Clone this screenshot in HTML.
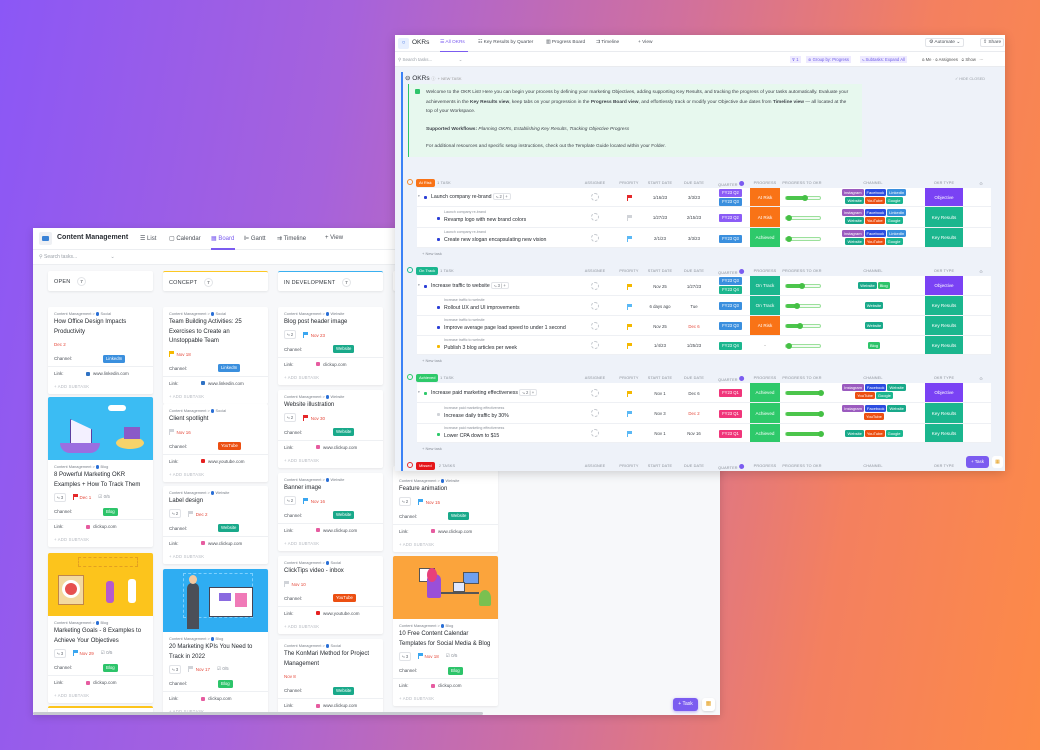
<!DOCTYPE html>
<html><head><meta charset="utf-8">
<style>
*{box-sizing:border-box}
body{margin:0;width:1040px;height:750px;overflow:hidden;position:relative;font-family:"Liberation Sans",sans-serif;color:#2a2e34;
background:linear-gradient(100deg,#8b57f6 0%,#a662dc 30%,#d0709e 58%,#f4805f 80%,#fd8a47 100%)}
.ab{position:absolute}
/* left window */
.lw{position:absolute;left:33px;top:228px;width:687px;height:487px;background:#f7f8fa;overflow:hidden;box-shadow:0 2px 8px rgba(0,0,0,.15)}
.lh{position:absolute;left:0;top:0;width:687px;height:22px;background:#fff;border-bottom:1px solid #eceef1}
.ls{position:absolute;left:0;top:22px;width:687px;height:15px;background:#fff;border-bottom:1px solid #eceef1}
.tab{position:absolute;top:7px;font-size:6px;color:#4b5058}
.colh{position:absolute;top:43px;width:105px;height:20px;background:#fff;border-radius:2px;box-shadow:0 1px 2px rgba(0,0,0,.08);font-size:5.5px;color:#33383f;padding:6px 6px;letter-spacing:.2px}
.colh b{font-weight:normal;display:inline-block;margin-left:5px;width:9px;height:9px;border:1px solid #e3e5e8;border-radius:50%;text-align:center;line-height:7px;font-size:4.5px;vertical-align:middle}
.card{position:absolute;width:105px;background:#fff;border-radius:2px;box-shadow:0 1px 2px rgba(0,0,0,.07);padding:3px 0 1px;overflow:hidden}
.card .img{height:63px;margin-top:-3px;margin-bottom:3px;position:relative;overflow:hidden}
.meta{font-size:3.9px;color:#7c828b;padding:0 6px;line-height:8px;white-space:nowrap}
.meta i{display:inline-block;width:3.5px;height:3.5px;border-radius:50%;background:#2a6fd6;vertical-align:middle}
.ttl{font-size:6px;line-height:9.5px;padding:0 6px;color:#25292f}
.ir{height:14px;padding:0 6px;display:flex;align-items:center;gap:7px;font-size:4.5px;color:#8a9099}
.chip{border:1px solid #e2e4e8;border-radius:2px;padding:1px 2px;font-size:4.5px;color:#6b7078}
.rd{color:#e5483a}
.fl{display:inline-block;width:5px;height:5px;position:relative}
.fl:before{content:"";position:absolute;left:0;top:0;width:1px;height:6px;background:currentColor}
.fl:after{content:"";position:absolute;left:1px;top:0;width:4px;height:3px;background:currentColor}
.ch{height:15px;padding:0 6px;position:relative;font-size:4.5px;line-height:15px;color:#4b5058}
.ch .tg{position:absolute;left:55px;top:3.5px}
.tg{display:inline-block;color:#fff;font-size:4.3px;line-height:8px;padding:0 3px;border-radius:1.5px}
.lk{height:14px;padding:0 6px;position:relative;font-size:4.5px;line-height:14px;color:#4b5058;border-top:1px solid #eef0f3}
.lk span{position:absolute;left:38px}
.lk span:before{content:"";display:inline-block;width:4px;height:4px;margin-right:3px;vertical-align:middle;background:var(--c,#e65ca0);border-radius:1px}
.as{height:13px;padding:0 6px;font-size:4.2px;line-height:13px;color:#b5b9c0;letter-spacing:.2px}
.li{background:#3a8fde}.yt{background:#ec4f12}.web{background:#19a98a}.blog{background:#2dc46a}
.ig{background:#9b5bbf}.fb{background:#2c4de0}.go{background:#1cb68f}
/* right window */
.rw{position:absolute;left:395px;top:35px;width:610px;height:436px;background:#eef2f9;overflow:hidden;box-shadow:0 2px 10px rgba(0,0,0,.18)}
.rh{position:absolute;left:0;top:0;width:610px;height:17px;background:#fff;border-bottom:1px solid #e9ebef}
.rs{position:absolute;left:0;top:17px;width:610px;height:15px;background:#fff;border-bottom:1px solid #e9ebef}
.rt{position:absolute;top:5px;font-size:4.8px;color:#4b5058}
.gh{position:absolute;left:14px;height:8px;width:590px;font-size:3.8px;color:#8a9099}
.gh span{position:absolute;top:1.5px;transform:translateX(-50%);white-space:nowrap;letter-spacing:.15px}
.badge{position:absolute;left:7px;top:0;color:#fff;font-size:4px;line-height:8px;padding:0 3px;border-radius:2px}
.r{position:absolute;left:22px;width:574px;background:#fff;border-bottom:1px solid #eef0f4}
.r>*{position:absolute}
.pn{font-size:5.2px;color:#25292f;white-space:nowrap}
.cm{font-size:3.6px;color:#8a9099;white-space:nowrap}
.dot{width:3px;height:3px;border-radius:1px}
.as2{width:8px;height:8px;border:1px dashed #c5c9cf;border-radius:50%;left:174px}
.dt{font-size:4.3px;color:#3f444b;width:34px;text-align:center}
.q{left:302px;width:23px;color:#fff;font-size:4.2px;line-height:7.5px;text-align:center;border-radius:1px}
.pc{left:333px;top:0;bottom:0;width:30px;color:#fff;font-size:4.6px;display:flex;align-items:center;justify-content:center}
.bar{left:368px;width:36px;height:4px;border:1px solid #9be09b;border-radius:3px;background:#f2fbf2}
.bar i{position:absolute;left:0;top:-1px;height:4px;background:#4cc54c;border-radius:3px}
.bar b{position:absolute;top:-2.5px;width:6px;height:6px;border-radius:50%;background:#45c045}
.chn{left:416px;width:82px;display:flex;flex-wrap:wrap;justify-content:center;gap:1px}
.chn .tg{font-size:4px;line-height:7px;padding:0 2px}
.ok{left:508px;top:0;bottom:0;width:38px;color:#fff;font-size:4.6px;display:flex;align-items:center;justify-content:center}
.obj{background:#7a42f4}.kr{background:#1bb68e}
.nt{position:absolute;left:27px;font-size:4px;color:#8a9099}
.sub{font-size:4.2px;color:#6b7078;border:1px solid #e2e4e8;border-radius:2px;padding:0 2px;line-height:6px}
</style></head><body>

<!-- LEFT WINDOW -->
<div class="lw">
 <div class="lh">
  <div class="ab" style="left:6px;top:4px;width:13px;height:13px;background:#eef0f4;border-radius:2px"><div class="ab" style="left:3px;top:4px;width:7px;height:5px;background:#3a82d6;border-radius:1px"></div></div>
  <div class="ab" style="left:24px;top:6px;font-size:7px;font-weight:bold;color:#2a2e34">Content Management</div>
  <div class="tab" style="left:107px">☰ List</div>
  <div class="tab" style="left:136px">▢ Calendar</div>
  <div class="tab" style="left:178px;color:#7b5cf0">▦ Board</div>
  <div class="ab" style="left:178px;top:20px;width:24px;height:1.5px;background:#7b5cf0"></div>
  <div class="tab" style="left:211px">⊫ Gantt</div>
  <div class="tab" style="left:244px">⇉ Timeline</div>
  <div class="tab" style="left:292px">+ View</div>
 </div>
 <div class="ls"><div class="ab" style="left:6px;top:4px;font-size:5px;color:#9aa0a8">⚲ Search tasks...&nbsp;&nbsp;&nbsp;&nbsp;&nbsp;&nbsp;&nbsp;&nbsp;&nbsp;&nbsp;&nbsp;&nbsp;&nbsp;&nbsp;&nbsp;&nbsp;&nbsp;&nbsp;&nbsp;&nbsp;&nbsp;&nbsp;&nbsp;&nbsp;⌄</div></div>

 <div class="colh" style="left:15px">OPEN <b>7</b></div>
 <div class="colh" style="left:130px;border-top:1.5px solid #fcc824">CONCEPT <b>7</b></div>
 <div class="colh" style="left:245px;border-top:1.5px solid #3ab0f0">IN DEVELOPMENT <b>7</b></div>
 <div class="colh" style="left:360px">READY <b>7</b></div>

 <!-- OPEN -->
 <div class="card" style="left:15px;top:79px">
  <div class="meta">Content Management &gt; <i></i> Social</div>
  <div class="ttl">How Office Design Impacts Productivity</div>
  <div class="ir"><span class="rd">Dec 2</span></div>
  <div class="ch">Channel: <span class="tg li">LinkedIn</span></div>
  <div class="lk">Link: <span style="--c:#2f72c4">www.linkedin.com</span></div>
  <div class="as">+ ADD SUBTASK</div>
 </div>
 <div class="card" style="left:15px;top:169px">
  <div class="img" style="background:#3bbcf3">
   <div class="ab" style="left:60px;top:8px;width:18px;height:6px;background:#fff;border-radius:4px"></div>
   <div class="ab" style="left:22px;top:22px;width:22px;height:26px;background:#f3f0ff;border:1px solid #5b3fa0;clip-path:polygon(0 0,100% 40%,100% 100%,0 100%)"></div>
   <div class="ab" style="left:12px;top:46px;width:40px;height:10px;background:#9b6ee0;border-radius:0 0 10px 10px"></div>
   <div class="ab" style="left:68px;top:40px;width:28px;height:12px;background:#f6d36a;border-radius:50%"></div>
   <div class="ab" style="left:76px;top:30px;width:16px;height:12px;background:#8a5ac8"></div>
  </div>
  <div class="meta">Content Management &gt; <i></i> Blog</div>
  <div class="ttl">8 Powerful Marketing OKR Examples + How To Track Them</div>
  <div class="ir"><span class="chip">⤷ 3</span><span class="rd"><span class="fl" style="color:#e5282a"></span> Dec 1</span><span>☑ 0/5</span></div>
  <div class="ch">Channel: <span class="tg blog">Blog</span></div>
  <div class="lk">Link: <span>clickup.com</span></div>
  <div class="as">+ ADD SUBTASK</div>
 </div>
 <div class="card" style="left:15px;top:325px">
  <div class="img" style="background:#fcc41c">
   <div class="ab" style="left:10px;top:22px;width:26px;height:30px;background:#f3d9a0;border:1px solid #c0864a"></div>
   <div class="ab" style="left:14px;top:27px;width:18px;height:18px;border-radius:50%;background:#e65050;border:3px solid #fff"></div>
   <div class="ab" style="left:30px;top:4px;width:60px;height:10px;border:1px dashed #e3a020"></div>
   <div class="ab" style="left:58px;top:28px;width:8px;height:22px;background:#b55bd0;border-radius:3px"></div>
   <div class="ab" style="left:80px;top:26px;width:8px;height:24px;background:#fff;border-radius:3px"></div>
  </div>
  <div class="meta">Content Management &gt; <i></i> Blog</div>
  <div class="ttl">Marketing Goals - 8 Examples to Achieve Your Objectives</div>
  <div class="ir"><span class="chip">⤷ 3</span><span class="rd"><span class="fl" style="color:#3aa6f0"></span> Nov 29</span><span>☑ 0/5</span></div>
  <div class="ch">Channel: <span class="tg blog">Blog</span></div>
  <div class="lk">Link: <span>clickup.com</span></div>
  <div class="as">+ ADD SUBTASK</div>
 </div>
 <div class="card" style="left:15px;top:478px;height:20px;border-top:2px solid #fcc41c"></div>

 <!-- CONCEPT -->
 <div class="card" style="left:130px;top:79px">
  <div class="meta">Content Management &gt; <i></i> Social</div>
  <div class="ttl">Team Building Activities: 25 Exercises to Create an Unstoppable Team</div>
  <div class="ir"><span class="rd"><span class="fl" style="color:#f5b800"></span>&nbsp; Nov 18</span></div>
  <div class="ch">Channel: <span class="tg li">LinkedIn</span></div>
  <div class="lk">Link: <span style="--c:#2f72c4">www.linkedin.com</span></div>
  <div class="as">+ ADD SUBTASK</div>
 </div>
 <div class="card" style="left:130px;top:176px">
  <div class="meta">Content Management &gt; <i></i> Social</div>
  <div class="ttl">Client spotlight</div>
  <div class="ir"><span class="rd"><span class="fl" style="color:#d0d3d8"></span>&nbsp; Nov 16</span></div>
  <div class="ch">Channel: <span class="tg yt">YouTube</span></div>
  <div class="lk">Link: <span style="--c:#e52020">www.youtube.com</span></div>
  <div class="as">+ ADD SUBTASK</div>
 </div>
 <div class="card" style="left:130px;top:258px">
  <div class="meta">Content Management &gt; <i></i> Website</div>
  <div class="ttl">Label design</div>
  <div class="ir"><span class="chip">⤷ 2</span><span class="rd"><span class="fl" style="color:#d0d3d8"></span>&nbsp; Dec 2</span></div>
  <div class="ch">Channel: <span class="tg web">Website</span></div>
  <div class="lk">Link: <span>www.clickup.com</span></div>
  <div class="as">+ ADD SUBTASK</div>
 </div>
 <div class="card" style="left:130px;top:341px">
  <div class="img" style="background:#2fadf2">
   <div class="ab" style="left:20px;top:4px;width:70px;height:45px;border:1px dashed #7dd0ff"></div>
   <div class="ab" style="left:46px;top:18px;width:44px;height:30px;background:#fff;border:1px solid #445"></div>
   <div class="ab" style="left:56px;top:24px;width:12px;height:8px;background:#8a6ae0"></div>
   <div class="ab" style="left:72px;top:24px;width:12px;height:14px;background:#f07ab8"></div>
   <div class="ab" style="left:24px;top:14px;width:12px;height:46px;background:#4b4f58;border-radius:5px 5px 0 0"></div>
   <div class="ab" style="left:26px;top:6px;width:8px;height:9px;background:#f5c9a0;border-radius:50%"></div>
  </div>
  <div class="meta">Content Management &gt; <i></i> Blog</div>
  <div class="ttl">20 Marketing KPIs You Need to Track in 2022</div>
  <div class="ir"><span class="chip">⤷ 3</span><span class="rd"><span class="fl" style="color:#d0d3d8"></span>&nbsp; Nov 17</span><span>☑ 0/5</span></div>
  <div class="ch">Channel: <span class="tg blog">Blog</span></div>
  <div class="lk">Link: <span>clickup.com</span></div>
  <div class="as">+ ADD SUBTASK</div>
 </div>

 <!-- IN DEV -->
 <div class="card" style="left:245px;top:79px">
  <div class="meta">Content Management &gt; <i></i> Website</div>
  <div class="ttl">Blog post header image</div>
  <div class="ir"><span class="chip">⤷ 2</span><span class="rd"><span class="fl" style="color:#3aa6f0"></span>&nbsp; Nov 23</span></div>
  <div class="ch">Channel: <span class="tg web">Website</span></div>
  <div class="lk">Link: <span>clickup.com</span></div>
  <div class="as">+ ADD SUBTASK</div>
 </div>
 <div class="card" style="left:245px;top:162px">
  <div class="meta">Content Management &gt; <i></i> Website</div>
  <div class="ttl">Website illustration</div>
  <div class="ir"><span class="chip">⤷ 2</span><span class="rd"><span class="fl" style="color:#e5282a"></span>&nbsp; Nov 30</span></div>
  <div class="ch">Channel: <span class="tg web">Website</span></div>
  <div class="lk">Link: <span>www.clickup.com</span></div>
  <div class="as">+ ADD SUBTASK</div>
 </div>
 <div class="card" style="left:245px;top:245px">
  <div class="meta">Content Management &gt; <i></i> Website</div>
  <div class="ttl">Banner image</div>
  <div class="ir"><span class="chip">⤷ 2</span><span class="rd"><span class="fl" style="color:#3aa6f0"></span>&nbsp; Nov 16</span></div>
  <div class="ch">Channel: <span class="tg web">Website</span></div>
  <div class="lk">Link: <span>www.clickup.com</span></div>
  <div class="as">+ ADD SUBTASK</div>
 </div>
 <div class="card" style="left:245px;top:328px">
  <div class="meta">Content Management &gt; <i></i> Social</div>
  <div class="ttl">ClickTips video - inbox</div>
  <div class="ir"><span class="rd"><span class="fl" style="color:#d0d3d8"></span>&nbsp; Nov 10</span></div>
  <div class="ch">Channel: <span class="tg yt">YouTube</span></div>
  <div class="lk">Link: <span style="--c:#e52020">www.youtube.com</span></div>
  <div class="as">+ ADD SUBTASK</div>
 </div>
 <div class="card" style="left:245px;top:411px">
  <div class="meta">Content Management &gt; <i></i> Social</div>
  <div class="ttl">The KonMari Method for Project Management</div>
  <div class="ir"><span class="rd">Nov 8</span></div>
  <div class="ch">Channel: <span class="tg web">Website</span></div>
  <div class="lk">Link: <span>www.clickup.com</span></div>
 </div>

 <!-- 4th -->
 <div class="card" style="left:360px;top:238px">
  <div class="meta">&nbsp;</div>
  <div class="meta">Content Management &gt; <i></i> Website</div>
  <div class="ttl">Feature animation</div>
  <div class="ir"><span class="chip">⤷ 2</span><span class="rd"><span class="fl" style="color:#3aa6f0"></span>&nbsp; Nov 15</span></div>
  <div class="ch">Channel: <span class="tg web">Website</span></div>
  <div class="lk">Link: <span>www.clickup.com</span></div>
  <div class="as">+ ADD SUBTASK</div>
 </div>
 <div class="card" style="left:360px;top:328px">
  <div class="img" style="background:#fba43c">
   <div class="ab" style="left:26px;top:12px;width:16px;height:14px;background:#fff;border:1px solid #555"></div>
   <div class="ab" style="left:70px;top:16px;width:16px;height:12px;background:#6fa0f0;border:1px solid #555"></div>
   <div class="ab" style="left:34px;top:18px;width:14px;height:24px;background:#9a4fd8;border-radius:6px 6px 2px 2px"></div>
   <div class="ab" style="left:34px;top:12px;width:10px;height:14px;background:#e8407a;border-radius:50%"></div>
   <div class="ab" style="left:48px;top:36px;width:38px;height:2px;background:#555"></div>
   <div class="ab" style="left:60px;top:26px;width:12px;height:10px;background:#dfe8ff;border:1px solid #555"></div>
   <div class="ab" style="left:86px;top:34px;width:12px;height:16px;background:#7ac050;border-radius:50% 50% 2px 2px"></div>
  </div>
  <div class="meta">Content Management &gt; <i></i> Blog</div>
  <div class="ttl">10 Free Content Calendar Templates for Social Media &amp; Blog</div>
  <div class="ir"><span class="chip">⤷ 3</span><span class="rd"><span class="fl" style="color:#3aa6f0"></span> Nov 18</span><span>☑ 0/5</span></div>
  <div class="ch">Channel: <span class="tg blog">Blog</span></div>
  <div class="lk">Link: <span>clickup.com</span></div>
  <div class="as">+ ADD SUBTASK</div>
 </div>

 <div class="ab" style="left:640px;top:470px;width:25px;height:13px;background:#7b5cf0;border-radius:3px;color:#fff;font-size:5px;line-height:13px;text-align:center;box-shadow:0 1px 3px rgba(123,92,240,.5)">+ Task</div>
 <div class="ab" style="left:669px;top:470px;width:13px;height:13px;background:#fff;border-radius:3px;box-shadow:0 1px 2px rgba(0,0,0,.15);font-size:6px;text-align:center;line-height:13px;color:#e5a020">▦</div>
 <div class="ab" style="left:0;top:484px;width:450px;height:3px;background:#c7cad0;border-radius:2px"></div>
</div>

<!-- RIGHT WINDOW -->
<div class="rw">
 <div class="rh">
  <div class="ab" style="left:3px;top:3px;width:11px;height:11px;background:#e7efff;border-radius:2px;color:#3a6fe0;font-size:6px;text-align:center;line-height:11px">○</div>
  <div class="ab" style="left:17px;top:4px;font-size:6.5px;color:#2a2e34">OKRs</div>
  <div class="rt" style="left:45px;color:#7b5cf0">☰ All OKRs</div>
  <div class="ab" style="left:45px;top:15.5px;width:28px;height:1.5px;background:#7b5cf0"></div>
  <div class="rt" style="left:83px">☷ Key Results by Quarter</div>
  <div class="rt" style="left:151px">▥ Progress Board</div>
  <div class="rt" style="left:201px">⇉ Timeline</div>
  <div class="rt" style="left:243px">+ View</div>
  <div class="rt" style="left:530px;border:1px solid #e2e4e8;border-radius:2px;padding:1px 3px;top:3px">⚙ Automate ⌄</div>
  <div class="rt" style="left:585px;border:1px solid #e2e4e8;border-radius:2px;padding:1px 2px;top:3px">⇪ Share</div>
 </div>
 <div class="rs">
  <div class="ab" style="left:3px;top:5px;font-size:4.5px;color:#9aa0a8">⚲ Search tasks...&nbsp;&nbsp;&nbsp;&nbsp;&nbsp;&nbsp;&nbsp;&nbsp;&nbsp;&nbsp;&nbsp;&nbsp;&nbsp;&nbsp;&nbsp;&nbsp;&nbsp;&nbsp;&nbsp;&nbsp;&nbsp;⌄</div>
  <div class="ab" style="left:395px;top:4px;font-size:4.2px;color:#6d5ce8;background:#eeeaff;padding:1px 2px">⊽ 1</div>
  <div class="ab" style="left:411px;top:4px;font-size:4.2px;color:#6d5ce8;background:#eeeaff;padding:1px 2px">⊜ Group by: Progress</div>
  <div class="ab" style="left:465px;top:4px;font-size:4.2px;color:#6d5ce8;background:#eeeaff;padding:1px 2px">⤷ Subtasks: Expand All</div>
  <div class="ab" style="left:527px;top:5px;font-size:4.2px;color:#555">⍝ Me · ⍝ Assignees &nbsp; ⊙ Show &nbsp; ···</div>
 </div>
 <div class="ab" style="left:6px;top:37px;width:1.5px;height:400px;background:#3b82f6"></div>
 <div class="ab" style="left:10px;top:39px;font-size:6.5px;color:#2a2e34">⊖ OKRs <span style="font-size:4px;color:#999">ⓘ &nbsp;+ NEW TASK</span></div>
 <div class="ab" style="left:560px;top:41px;font-size:3.8px;color:#9aa0a8">✓ HIDE CLOSED</div>
 <div class="ab" style="left:13px;top:49px;width:454px;height:73px;background:#e7f8ee;border-left:1.5px solid #2dc46a;padding:4px 12px 0 17px;font-size:4.8px;line-height:9.5px;color:#3f444b">
  <div class="ab" style="left:6px;top:5px;width:5px;height:5px;background:#2dc46a;border-radius:1px"></div>
  Welcome to the OKR List! Here you can begin your process by defining your marketing Objectives, adding supporting Key Results, and tracking the progress of your tasks automatically. Evaluate your achievements in the <b>Key Results view</b>, keep tabs on your progression in the <b>Progress Board view</b>, and effortlessly track or modify your Objective due dates from <b>Timeline view</b> — all located at the top of your Workspace.<br>
  <div style="height:8px"></div>
  <b>Supported Workflows:</b> <i>Planning OKRs</i>, <i>Establishing Key Results</i>, <i>Tracking Objective Progress</i><br>
  <div style="height:8px"></div>
  For additional resources and specific setup instructions, check out the Template Guide located within your Folder.
 </div>

 <!-- group header template positions -->
 <!-- AT RISK -->
 <div class="gh" style="top:144px"><div class="ab" style="left:-2px;top:0;width:6px;height:6px;border:1px solid #f08a30;border-radius:50%"></div><div class="badge" style="background:#f97316">At Risk</div><span style="left:35px">1 TASK</span><span style="left:186px">ASSIGNEE</span><span style="left:220px">PRIORITY</span><span style="left:251px">START DATE</span><span style="left:285px">DUE DATE</span><span style="left:322px">QUARTER <b style="display:inline-block;width:5px;height:5px;background:#7b5cf0;border-radius:50%"></b></span><span style="left:356px">PROGRESS</span><span style="left:393px">PROGRESS TO OKR</span><span style="left:464px">CHANNEL</span><span style="left:535px">OKR TYPE</span><span style="left:572px">⊙</span></div>
 <div class="r" style="top:153px;height:19px">
  <span class="cm" style="left:1px;top:6px">▾</span><div class="dot" style="left:7px;top:8px;background:#2c3fd6"></div><span class="pn" style="left:14px;top:6px">Launch company re-brand <span class="sub">⤷ 2 | +</span></span>
  <div class="as2" style="top:5px"></div><span class="fl" style="left:210px;top:7px;color:#e5282a"></span>
  <span class="dt" style="left:226px;top:7px">1/16/23</span><span class="dt" style="left:260px;top:7px">3/3/23</span>
  <div class="q" style="top:1px;background:#8b5cf6">FY23 Q2</div><div class="q" style="top:10px;background:#3a8fde">FY23 Q3</div>
  <div class="pc" style="background:#f97316">At Risk</div>
  <div class="bar" style="top:8px"><i style="width:18px"></i><b style="left:16px"></b></div>
  <div class="chn" style="top:1px"><span class="tg ig">Instagram</span><span class="tg fb">Facebook</span><span class="tg li">LinkedIn</span><span class="tg web">Website</span><span class="tg yt">YouTube</span><span class="tg go">Google</span></div>
  <div class="ok obj">Objective</div>
 </div>
 <div class="r" style="top:172px;height:21px">
  <div class="dot" style="left:20px;top:10px;background:#2c3fd6"></div><span class="cm" style="left:27px;top:3px">Launch company re-brand</span><span class="pn" style="left:27px;top:10px">Revamp logo with new brand colors</span>
  <div class="as2" style="top:6px"></div><span class="fl" style="left:210px;top:8px;color:#d0d3d8"></span>
  <span class="dt" style="left:226px;top:8px">1/27/23</span><span class="dt" style="left:260px;top:8px">2/15/23</span>
  <div class="q" style="top:7px;background:#8b5cf6">FY23 Q2</div>
  <div class="pc" style="background:#f97316">At Risk</div>
  <div class="bar" style="top:9px"><b style="left:0"></b></div>
  <div class="chn" style="top:2px"><span class="tg ig">Instagram</span><span class="tg fb">Facebook</span><span class="tg li">LinkedIn</span><span class="tg web">Website</span><span class="tg yt">YouTube</span><span class="tg go">Google</span></div>
  <div class="ok kr">Key Results</div>
 </div>
 <div class="r" style="top:193px;height:20px">
  <div class="dot" style="left:20px;top:10px;background:#2c3fd6"></div><span class="cm" style="left:27px;top:2px">Launch company re-brand</span><span class="pn" style="left:27px;top:9px">Create new slogan encapsulating new vision</span>
  <div class="as2" style="top:6px"></div><span class="fl" style="left:210px;top:8px;color:#5ab8f5"></span>
  <span class="dt" style="left:226px;top:8px">2/1/23</span><span class="dt" style="left:260px;top:8px">3/3/23</span>
  <div class="q" style="top:7px;background:#3a8fde">FY23 Q3</div>
  <div class="pc" style="background:#2ec96a">Achieved</div>
  <div class="bar" style="top:9px"><b style="left:0"></b></div>
  <div class="chn" style="top:2px"><span class="tg ig">Instagram</span><span class="tg fb">Facebook</span><span class="tg li">LinkedIn</span><span class="tg web">Website</span><span class="tg yt">YouTube</span><span class="tg go">Google</span></div>
  <div class="ok kr">Key Results</div>
 </div>
 <div class="nt" style="top:216px">+ New task</div>

 <!-- ON TRACK -->
 <div class="gh" style="top:232px"><div class="ab" style="left:-2px;top:0;width:6px;height:6px;border:1px solid #1bb68e;border-radius:50%"></div><div class="badge" style="background:#1bb68e">On Track</div><span style="left:38px">1 TASK</span><span style="left:186px">ASSIGNEE</span><span style="left:220px">PRIORITY</span><span style="left:251px">START DATE</span><span style="left:285px">DUE DATE</span><span style="left:322px">QUARTER <b style="display:inline-block;width:5px;height:5px;background:#7b5cf0;border-radius:50%"></b></span><span style="left:356px">PROGRESS</span><span style="left:393px">PROGRESS TO OKR</span><span style="left:464px">CHANNEL</span><span style="left:535px">OKR TYPE</span><span style="left:572px">⊙</span></div>
 <div class="r" style="top:241px;height:20px">
  <span class="cm" style="left:1px;top:7px">▾</span><div class="dot" style="left:7px;top:9px;background:#2c3fd6"></div><span class="pn" style="left:14px;top:7px">Increase traffic to website <span class="sub">⤷ 3 | +</span></span>
  <div class="as2" style="top:6px"></div><span class="fl" style="left:210px;top:8px;color:#f5b800"></span>
  <span class="dt" style="left:226px;top:8px">Nov 25</span><span class="dt" style="left:260px;top:8px">1/27/23</span>
  <div class="q" style="top:1px;background:#3a8fde">FY23 Q3</div><div class="q" style="top:10px;background:#1bb68e">FY23 Q4</div>
  <div class="pc" style="background:#1bb68e">On Track</div>
  <div class="bar" style="top:8px"><i style="width:15px"></i><b style="left:13px"></b></div>
  <div class="chn" style="top:6px"><span class="tg web">Website</span><span class="tg blog">Blog</span></div>
  <div class="ok obj">Objective</div>
 </div>
 <div class="r" style="top:261px;height:20px">
  <div class="dot" style="left:20px;top:10px;background:#2c3fd6"></div><span class="cm" style="left:27px;top:2px">Increase traffic to website</span><span class="pn" style="left:27px;top:9px">Rollout UX and UI improvements</span>
  <div class="as2" style="top:6px"></div><span class="fl" style="left:210px;top:8px;color:#5ab8f5"></span>
  <span class="dt" style="left:226px;top:8px">6 days ago</span><span class="dt" style="left:260px;top:8px">Tue</span>
  <div class="q" style="top:6px;background:#3a8fde">FY23 Q3</div>
  <div class="pc" style="background:#1bb68e">On Track</div>
  <div class="bar" style="top:8px"><i style="width:10px"></i><b style="left:8px"></b></div>
  <div class="chn" style="top:6px"><span class="tg web">Website</span></div>
  <div class="ok kr">Key Results</div>
 </div>
 <div class="r" style="top:281px;height:20px">
  <div class="dot" style="left:20px;top:10px;background:#2c3fd6"></div><span class="cm" style="left:27px;top:2px">Increase traffic to website</span><span class="pn" style="left:27px;top:9px">Improve average page load speed to under 1 second</span>
  <div class="as2" style="top:6px"></div><span class="fl" style="left:210px;top:8px;color:#f5b800"></span>
  <span class="dt" style="left:226px;top:8px">Nov 25</span><span class="dt rd" style="left:260px;top:8px;color:#e5483a">Dec 6</span>
  <div class="q" style="top:6px;background:#3a8fde">FY23 Q3</div>
  <div class="pc" style="background:#f97316">At Risk</div>
  <div class="bar" style="top:8px"><i style="width:13px"></i><b style="left:11px"></b></div>
  <div class="chn" style="top:6px"><span class="tg web">Website</span></div>
  <div class="ok kr">Key Results</div>
 </div>
 <div class="r" style="top:301px;height:19px">
  <div class="dot" style="left:20px;top:9px;background:#f5b800"></div><span class="cm" style="left:27px;top:2px">Increase traffic to website</span><span class="pn" style="left:27px;top:9px">Publish 3 blog articles per week</span>
  <div class="as2" style="top:5px"></div><span class="fl" style="left:210px;top:7px;color:#f5b800"></span>
  <span class="dt" style="left:226px;top:7px">1/4/23</span><span class="dt" style="left:260px;top:7px">1/25/23</span>
  <div class="q" style="top:6px;background:#1bb68e">FY23 Q4</div>
  <div class="pc" style="color:#555;background:#fff">-</div>
  <div class="bar" style="top:8px"><b style="left:0"></b></div>
  <div class="chn" style="top:6px"><span class="tg blog">Blog</span></div>
  <div class="ok kr">Key Results</div>
 </div>
 <div class="nt" style="top:323px">+ New task</div>

 <!-- ACHIEVED -->
 <div class="gh" style="top:339px"><div class="ab" style="left:-2px;top:0;width:6px;height:6px;border:1px solid #2ec96a;border-radius:50%"></div><div class="badge" style="background:#2ec96a">Achieved</div><span style="left:38px">1 TASK</span><span style="left:186px">ASSIGNEE</span><span style="left:220px">PRIORITY</span><span style="left:251px">START DATE</span><span style="left:285px">DUE DATE</span><span style="left:322px">QUARTER <b style="display:inline-block;width:5px;height:5px;background:#7b5cf0;border-radius:50%"></b></span><span style="left:356px">PROGRESS</span><span style="left:393px">PROGRESS TO OKR</span><span style="left:464px">CHANNEL</span><span style="left:535px">OKR TYPE</span><span style="left:572px">⊙</span></div>
 <div class="r" style="top:348px;height:20px">
  <span class="cm" style="left:1px;top:7px">▾</span><div class="dot" style="left:7px;top:9px;background:#2ec96a"></div><span class="pn" style="left:14px;top:7px">Increase paid marketing effectiveness <span class="sub">⤷ 2 | +</span></span>
  <div class="as2" style="top:6px"></div><span class="fl" style="left:210px;top:8px;color:#f5b800"></span>
  <span class="dt" style="left:226px;top:8px">Nov 1</span><span class="dt" style="left:260px;top:8px">Dec 6</span>
  <div class="q" style="top:6px;background:#f0357a">FY23 Q1</div>
  <div class="pc" style="background:#2ec96a">Achieved</div>
  <div class="bar" style="top:8px"><i style="width:36px"></i><b style="left:32px"></b></div>
  <div class="chn" style="top:1px"><span class="tg ig">Instagram</span><span class="tg fb">Facebook</span><span class="tg web">Website</span><span class="tg yt">YouTube</span><span class="tg go">Google</span></div>
  <div class="ok obj">Objective</div>
 </div>
 <div class="r" style="top:368px;height:21px">
  <div class="dot" style="left:20px;top:10px;background:#d0d3d8"></div><span class="cm" style="left:27px;top:3px">Increase paid marketing effectiveness</span><span class="pn" style="left:27px;top:10px">Increase daily traffic by 30%</span>
  <div class="as2" style="top:6px"></div><span class="fl" style="left:210px;top:8px;color:#5ab8f5"></span>
  <span class="dt" style="left:226px;top:8px">Nov 3</span><span class="dt" style="left:260px;top:8px;color:#e5483a">Dec 2</span>
  <div class="q" style="top:7px;background:#f0357a">FY23 Q1</div>
  <div class="pc" style="background:#2ec96a">Achieved</div>
  <div class="bar" style="top:9px"><i style="width:36px"></i><b style="left:32px"></b></div>
  <div class="chn" style="top:2px"><span class="tg ig">Instagram</span><span class="tg fb">Facebook</span><span class="tg web">Website</span><span class="tg yt">YouTube</span></div>
  <div class="ok kr">Key Results</div>
 </div>
 <div class="r" style="top:389px;height:19px">
  <div class="dot" style="left:20px;top:9px;background:#2ec96a"></div><span class="cm" style="left:27px;top:2px">Increase paid marketing effectiveness</span><span class="pn" style="left:27px;top:9px">Lower CPA down to $15</span>
  <div class="as2" style="top:5px"></div><span class="fl" style="left:210px;top:7px;color:#5ab8f5"></span>
  <span class="dt" style="left:226px;top:7px">Nov 1</span><span class="dt" style="left:260px;top:7px">Nov 16</span>
  <div class="q" style="top:6px;background:#f0357a">FY23 Q1</div>
  <div class="pc" style="background:#2ec96a">Achieved</div>
  <div class="bar" style="top:8px"><i style="width:36px"></i><b style="left:32px"></b></div>
  <div class="chn" style="top:6px"><span class="tg web">Website</span><span class="tg yt">YouTube</span><span class="tg go">Google</span></div>
  <div class="ok kr">Key Results</div>
 </div>
 <div class="nt" style="top:411px">+ New task</div>

 <!-- MISSED -->
 <div class="gh" style="top:427px"><div class="ab" style="left:-2px;top:0;width:6px;height:6px;border:1px solid #e5282a;border-radius:50%"></div><div class="badge" style="background:#e5161a">Missed</div><span style="left:38px">2 TASKS</span><span style="left:186px">ASSIGNEE</span><span style="left:220px">PRIORITY</span><span style="left:251px">START DATE</span><span style="left:285px">DUE DATE</span><span style="left:322px">QUARTER <b style="display:inline-block;width:5px;height:5px;background:#7b5cf0;border-radius:50%"></b></span><span style="left:356px">PROGRESS</span><span style="left:393px">PROGRESS TO OKR</span><span style="left:464px">CHANNEL</span><span style="left:535px">OKR TYPE</span><span style="left:572px">⊙</span></div>

 <div class="ab" style="left:571px;top:421px;width:23px;height:12px;background:#7b5cf0;border-radius:3px;color:#fff;font-size:4.5px;line-height:12px;text-align:center">+ Task</div>
 <div class="ab" style="left:597px;top:421px;width:11px;height:12px;background:#fff;border-radius:3px;font-size:5px;text-align:center;line-height:12px;color:#e5a020">▦</div>
</div>
</body></html>
